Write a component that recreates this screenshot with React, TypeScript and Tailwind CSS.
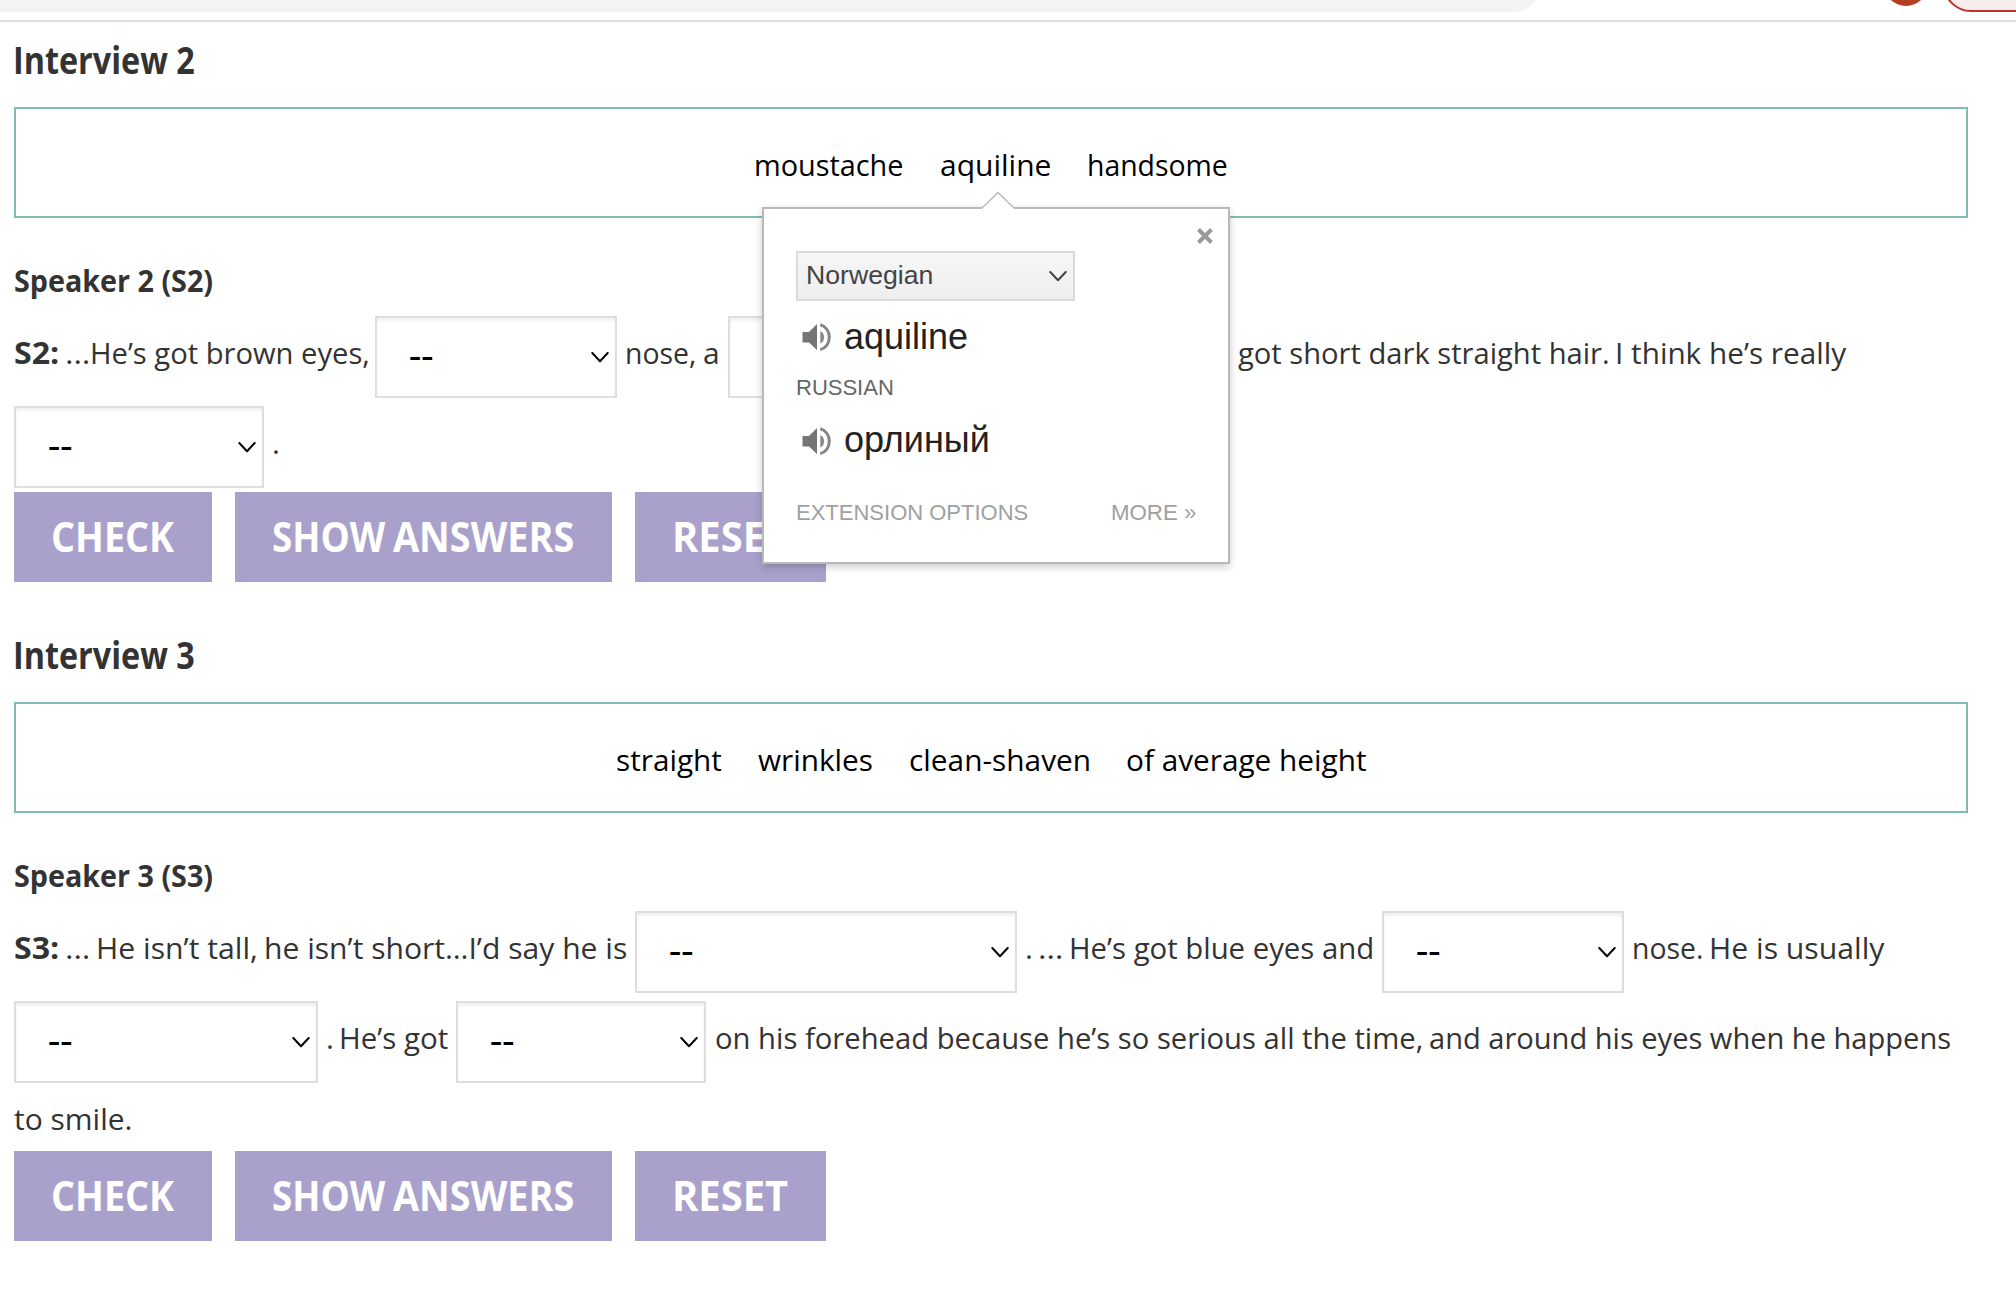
import { useLayoutEffect, useRef, useState } from "react";
import clsx from "clsx";

/* Text condensed horizontally so that it fills the width of its box. */
function Fit({ text, className }: { text: string; className?: string }) {
  const box = useRef<HTMLSpanElement>(null);
  const inner = useRef<HTMLSpanElement>(null);
  const [scale, setScale] = useState(1);
  useLayoutEffect(() => {
    if (box.current && inner.current) {
      setScale(box.current.offsetWidth / inner.current.offsetWidth);
    }
  }, [text]);
  return (
    <span ref={box} className={clsx("block shrink-0 whitespace-nowrap", className)}>
      <span ref={inner} className="inline-block origin-left" style={{ transform: `scaleX(${scale})` }}>
        {text}
      </span>
    </span>
  );
}

function Chevron({ className }: { className?: string }) {
  return (
    <svg viewBox="0 0 18 11" className={clsx("h-[11px] w-[18px] shrink-0", className)} fill="none" stroke="currentColor" strokeWidth="2" strokeLinecap="round" strokeLinejoin="round">
      <path d="M1.3 1 9 9.2 16.7 1" />
    </svg>
  );
}

function Gap({ className }: { className: string }) {
  return (
    <span className={clsx("flex h-[82px] shrink-0 items-center justify-between border-2 border-[#dedede] bg-white pr-[6px] pl-[32px] text-black shadow-[inset_0_3px_3px_rgba(0,0,0,0.06)]", className)}>
      <Fit text="--" className="w-[24px] pb-[2px] font-semibold" />
      <Chevron />
    </span>
  );
}

function Actions() {
  const btn = "flex h-[90px] items-center bg-[#a9a1cb] pl-[37px] pb-[2px] text-[42px] leading-none font-bold text-white";
  return (
    <div className="flex">
      <button className={clsx(btn, "w-[198px]")}><Fit text="CHECK" className="w-[123px]" /></button>
      <button className={clsx(btn, "ml-[23px] w-[377px]")}>
        <Fit text="SHOW" className="w-[113px]" />
        <Fit text="ANSWERS" className="ml-[8px] w-[181px]" />
      </button>
      <button className={clsx(btn, "ml-[23px] w-[191px]")}><Fit text="RESET" className="w-[116px]" /></button>
    </div>
  );
}

function Speaker() {
  return (
    <svg viewBox="0 0 30 30" className="h-[30px] w-[30px] shrink-0" fill="#757575">
      <path d="M0.500 10h6.500L15 2v26L7 20.500H0.500z" />
      <path d="M18.300 9c2.600 1.300 3.800 3.600 3.800 6.200s-1.200 5-3.800 6.300z" fill="#8a8a8a" />
      <path d="M18.300 2.800c5.400 1.600 9 6.400 9 12.400s-3.600 10.800-9 12.400" fill="none" stroke="#858585" strokeWidth="3" />
    </svg>
  );
}

function Popup() {
  return (
    <div className="absolute top-[207px] left-[762px] h-[357px] w-[468px] border-2 border-[#b9b9b9] bg-white font-['Liberation_Sans',Arial,sans-serif] font-normal shadow-[0_3px_8px_rgba(0,0,0,0.2)]">
      <svg viewBox="0 0 34 19" className="absolute -top-[18px] left-[217px] h-[19px] w-[34px]">
        <path d="M1 17 17 1.500 33 17V19H1z" fill="#fff" />
        <path d="M1 17 17 1.500 33 17" fill="none" stroke="#bbb" strokeWidth="1.500" />
      </svg>
      <svg viewBox="0 0 16 16" className="absolute top-[19px] left-[433px] size-[16px]" stroke="#999" strokeWidth="4">
        <path d="M1.500 1.500l13 13M14.500 1.500l-13 13" />
      </svg>
      <div className="pt-[42px] pl-[32px]">
        <div className="flex h-[50px] w-[279px] items-center justify-between border-2 border-[#dadada] bg-linear-to-b from-[#f6f6f6] to-[#efefef] pr-[6px] pl-[8px] text-[26px] leading-none text-[#444]">
          <Fit text="Norwegian" className="w-[127px] pb-[2px]" />
          <Chevron />
        </div>
        <div className="flex h-[72px] items-center pl-[6px] text-[36px] leading-none text-[#222]">
          <Speaker />
          <Fit text="aquiline" className="ml-[12px] w-[124px]" />
        </div>
        <div className="h-[32px] text-[22px] leading-[30px] text-[#666]"><Fit text="RUSSIAN" className="w-[98px]" /></div>
        <div className="flex h-[72px] items-center pl-[6px] pb-[1px] text-[36px] leading-none text-[#222]">
          <Speaker />
          <Fit text="орлиный" className="ml-[12px] w-[146px] pb-[2px]" />
        </div>
        <div className="mt-[21px] flex w-[400px] justify-between text-[22px] leading-[30px] text-[#a0a0a0]">
          <Fit text="EXTENSION OPTIONS" className="w-[232px]" />
          <Fit text="MORE »" className="w-[85px]" />
        </div>
      </div>
    </div>
  );
}

const txt = "pb-[8px]";

export default function App() {
  return (
    <div className="relative h-[1290px] w-[2016px] overflow-hidden bg-white font-['Open_Sans','Noto_Sans',sans-serif] text-[30px] leading-[40px] font-medium text-[#333]">
      <header className="flex h-[22px] items-start overflow-hidden border-b-2 border-[#dcdcdc]">
        <div className="-mt-[44px] h-[56px] w-[1541px] shrink-0 rounded-r-full bg-[#f1f3f4]" />
        <div className="-mt-[38px] ml-[343px] size-[44px] shrink-0 rounded-full bg-[#b33f20]" />
        <div className="-mt-[44px] ml-[15px] h-[56px] w-[140px] shrink-0 rounded-l-full border-2 border-[#b93229] bg-[#f8ecec]" />
      </header>

      <main className="pl-[14px]">
        <section className="h-[595px]">
          <h2 className="pt-[14px] text-[37.500px] leading-[48px] font-bold"><Fit text="Interview 2" className="-ml-[1px] w-[182px]" /></h2>
          <div className="mt-[23px] flex h-[111px] w-[1954px] border-2 border-[#80bbb7] pt-[36px] text-black">
            <Fit text="moustache" className="ml-[738px] w-[150px]" />
            <Fit text="aquiline" className="ml-[36px] w-[111px]" />
            <Fit text="handsome" className="ml-[36px] w-[141px]" />
          </div>
          <h3 className="pt-[43px] font-bold"><Fit text="Speaker 2 (S2)" className="w-[199px]" /></h3>
          <div className="mt-[15px] flex items-center">
            <Fit text="S2:" className={clsx(txt, "w-[45px] font-bold")} />
            <Fit text="…" className={clsx(txt, "ml-[6px] w-[25px]")} />
            <Fit text="He’s got brown eyes," className={clsx(txt, "w-[280px]")} />
            <Gap className="ml-[5px] w-[242px]" />
            <Fit text="nose," className={clsx(txt, "ml-[8px] w-[71px]")} />
            <Fit text="a" className={clsx(txt, "ml-[7px] w-[17px]")} />
            <Gap className="ml-[8px] w-[250px]" />
            <Fit text="got short dark straight hair." className={clsx(txt, "ml-[260px] w-[372px]")} />
            <Fit text="I think he’s really" className={clsx(txt, "ml-[5px] w-[231px]")} />
          </div>
          <div className="mt-[8px] flex items-center">
            <Gap className="w-[250px]" />
            <Fit text="." className={clsx(txt, "ml-[8px] w-[8px]")} />
          </div>
          <div className="mt-[4px]"><Actions /></div>
        </section>

        <section>
          <h2 className="pt-[14px] text-[37.500px] leading-[48px] font-bold"><Fit text="Interview 3" className="-ml-[1px] w-[182px]" /></h2>
          <div className="mt-[23px] flex h-[111px] w-[1954px] border-2 border-[#80bbb7] pt-[36px] text-black">
            <Fit text="straight" className="ml-[600px] w-[106px]" />
            <Fit text="wrinkles" className="ml-[36px] w-[115px]" />
            <Fit text="clean-shaven" className="ml-[36px] w-[182px]" />
            <Fit text="of average height" className="ml-[35px] w-[241px]" />
          </div>
          <h3 className="pt-[43px] font-bold"><Fit text="Speaker 3 (S3)" className="w-[199px]" /></h3>
          <div className="mt-[15px] flex items-center">
            <Fit text="S3:" className={clsx(txt, "w-[45px] font-bold")} />
            <Fit text="…" className={clsx(txt, "ml-[6px] w-[25px]")} />
            <Fit text="He isn’t tall," className={clsx(txt, "ml-[6px] w-[162px]")} />
            <Fit text="he isn’t short…I’d say he is" className={clsx(txt, "ml-[6px] w-[363px]")} />
            <Gap className="ml-[8px] w-[382px]" />
            <Fit text="." className={clsx(txt, "ml-[8px] w-[8px]")} />
            <Fit text="…" className={clsx(txt, "ml-[5px] w-[25px]")} />
            <Fit text="He’s got blue eyes and" className={clsx(txt, "ml-[6px] w-[305px]")} />
            <Gap className="ml-[8px] w-[242px]" />
            <Fit text="nose." className={clsx(txt, "ml-[8px] w-[71px]")} />
            <Fit text="He is usually" className={clsx(txt, "ml-[6px] w-[175px]")} />
          </div>
          <div className="mt-[8px] flex items-center">
            <Gap className="w-[304px]" />
            <Fit text="." className={clsx(txt, "ml-[8px] w-[8px]")} />
            <Fit text="He’s got" className={clsx(txt, "ml-[5px] w-[109px]")} />
            <Gap className="ml-[8px] w-[250px]" />
            <Fit text="on his forehead because he’s so serious all the time," className={clsx(txt, "ml-[9px] w-[708px]")} />
            <Fit text="and around his eyes when he happens" className={clsx(txt, "ml-[6px] w-[522px]")} />
          </div>
          <div className="mt-[16px] h-[52px]"><Fit text="to smile." className="w-[118px]" /></div>
          <Actions />
        </section>
      </main>

      <Popup />
    </div>
  );
}
